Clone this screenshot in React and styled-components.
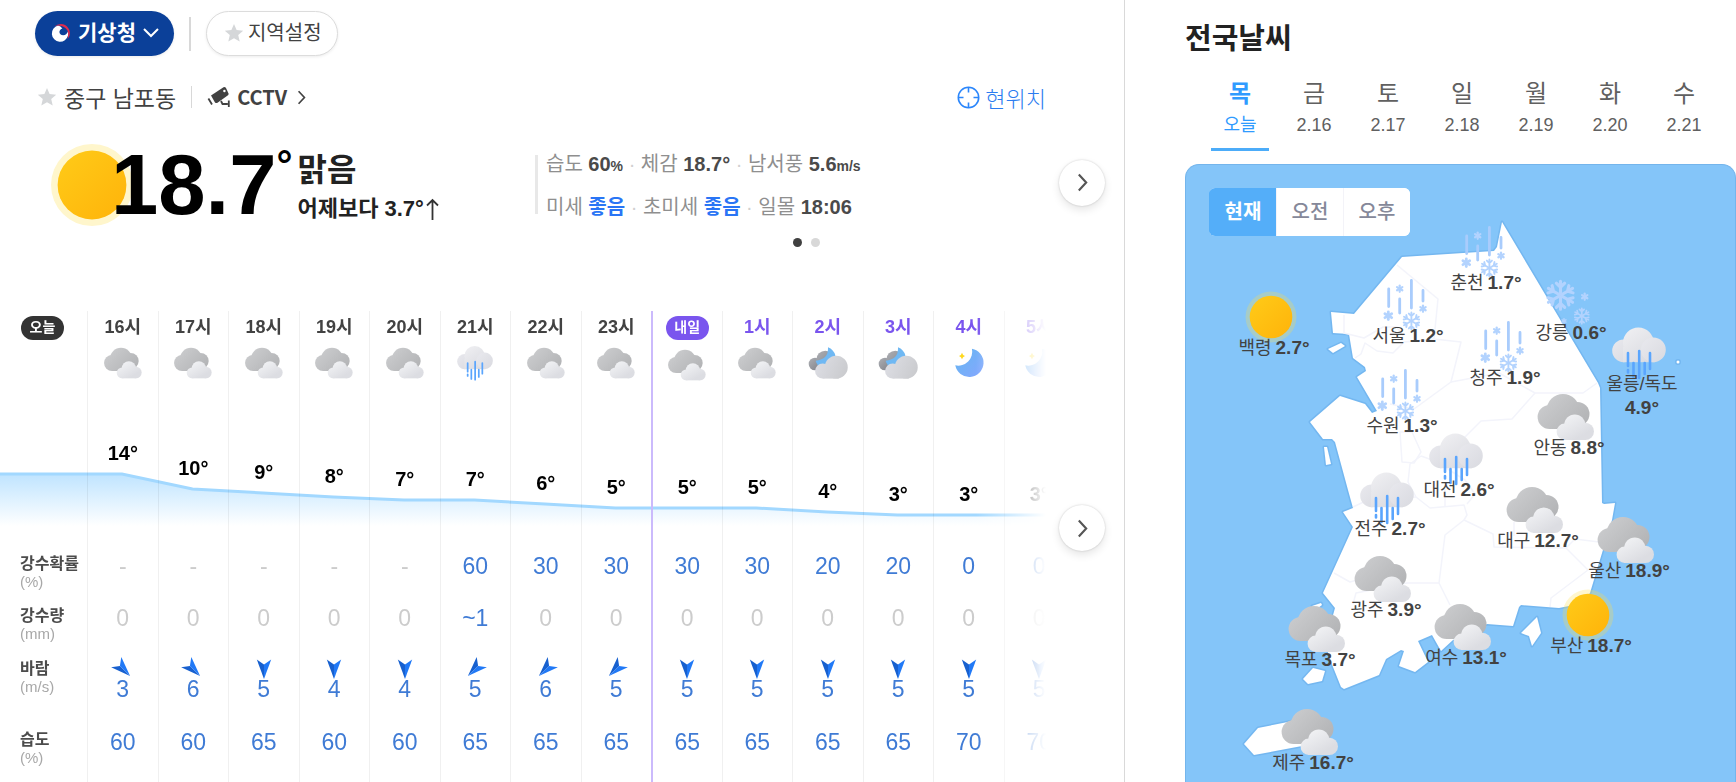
import React, { useState } from 'react'
import styled, { createGlobalStyle } from 'styled-components'

const GlobalStyle = createGlobalStyle`
  * {
    box-sizing: border-box;
  }

  body {
    margin: 0;
    background: #fff;
    color: #424242;
    font-family: 'Liberation Sans', 'Noto Sans CJK KR', sans-serif;
  }

  button {
    margin: 0;
    padding: 0;
    border: 0;
    background: none;
    color: inherit;
    font: inherit;
    cursor: pointer;
  }

  a {
    color: inherit;
    text-decoration: none;
  }

  svg {
    display: block;
    flex: none;
  }
`

const Page = styled.div`
  display: grid;
  grid-template-columns: minmax(0, 1fr) 611px;
  min-height: 100vh;
`

const Local = styled.main`
  min-width: 0;
  border-right: 1px solid #d9d9d9;
`

const Bar = styled.div`
  display: flex;
  align-items: center;
  padding: 11px 35px 0;
`

const Divider = styled.span`
  flex: none;
  width: ${p => (p.$thick ? 2 : 1)}px;
  height: ${p => (p.$thick ? 34 : 22)}px;
  margin: 0 15px;
  background: #d8d8d8;
`

const Pill = styled.button`
  display: flex;
  align-items: center;
  height: 45px;
  border-radius: 23px;
  line-height: 28px;
  white-space: nowrap;
  box-shadow: 0 1px 3px rgba(0, 0, 0, 0.08);
`

const ProviderPill = styled(Pill)`
  gap: 7px;
  padding: 0 15px 2px 16px;
  background: #0b4099;
  color: #fff;
  font-size: 21px;
  font-weight: bold;
`

const RegionPill = styled(Pill)`
  gap: 4px;
  padding: 0 15px 2px 17px;
  border: 1px solid #dcdcdc;
  background: #fff;
  font-size: 20px;
`

const Location = styled.div`
  display: flex;
  align-items: center;
  height: 40px;
  margin-top: 21px;
  padding: 0 78px 0 37px;
`

const Place = styled.button`
  display: flex;
  align-items: center;
  gap: 7px;
  font-size: 23px;
  white-space: nowrap;
`

const Cctv = styled.a`
  display: flex;
  align-items: center;
  gap: 6px;
  font-family: 'Noto Sans CJK KR', sans-serif;
  font-size: 20px;
  font-weight: bold;
  line-height: 30px;

  svg:last-child {
    margin-left: 4px;
  }
`

const Here = styled.button`
  display: flex;
  align-items: center;
  gap: 5px;
  margin-left: auto;
  color: #2b7cf0;
  font-size: 22px;
  font-weight: 300;
`

const Now = styled.section`
  display: grid;
  grid-template-columns: minmax(0, 1fr) 78px;
  margin-top: 1px;
`

const NowBody = styled.div`
  display: grid;
  grid-template-columns: 535px minmax(0, 1fr);
  padding-top: 26px;
`

const Reading = styled.div`
  display: flex;
  align-items: flex-start;
  padding-left: 51px;
`

const Temp = styled.strong`
  display: flex;
  margin-left: -22px;
  color: #000;
  font-size: 85px;
  line-height: 82px;
`

const Degree = styled.span`
  font-size: 40px;
  line-height: 42px;
`

const Status = styled.div`
  padding: 6px 0 0 5px;
  color: #222;
  font-weight: bold;
  white-space: nowrap;
`

const Sky = styled.div`
  font-size: 32px;
  line-height: 40px;
`

const Compare = styled.div`
  display: flex;
  align-items: center;
  gap: 2px;
  font-size: 22px;
  line-height: 38px;
`

const Detail = styled.div`
  display: grid;
  grid-template-columns: 3px minmax(0, 1fr);
  column-gap: 8px;
  align-items: start;
`

const DetailRule = styled.span`
  height: 59px;
  margin-top: 11px;
  background: #e8e8e8;
`

const DetailLine = styled.p`
  margin: 0;
  color: #8f8f8f;
  font-size: 20px;
  line-height: 41px;
  white-space: nowrap;

  b {
    color: ${p => (p.$dust ? '#2a75f5' : '#4a4a4a')};
  }

  b:last-child {
    color: #4a4a4a;
  }

  small {
    font-size: 14px;
  }

  i {
    color: #d0d0d0;
    font-style: normal;
  }
`

const Pager = styled.div`
  display: flex;
  justify-content: center;
  gap: 9px;
  padding: 10px 0 0 20px;
`

const PagerDot = styled.button`
  width: 9px;
  height: 9px;
  border-radius: 50%;
  background: ${p => (p.$on ? '#404040' : '#d8d8d8')};
`

const NextButton = styled.button`
  display: grid;
  place-items: center;
  justify-self: end;
  align-self: ${p => (p.$top ? 'start' : 'center')};
  width: 46px;
  height: 46px;
  margin: ${p => (p.$top ? 194 : 0)}px 19px 0 0;
  border-radius: 50%;
  background: #fff;
  box-shadow: 0 0 2px rgba(0, 0, 0, 0.2), 0 4px 9px rgba(0, 0, 0, 0.1);
`

const Hourly = styled.section`
  display: grid;
  grid-template-columns: minmax(0, 1fr) 78px;
  margin-top: 64px;
`

const Scroller = styled.div`
  overflow: hidden;
  mask-image: linear-gradient(to right, #000 calc(100% - 70px), transparent);
`

const Track = styled.div`
  position: relative;
  width: calc(100% + 28px);
`

// temperature curve runs behind the cells of the temperature row
const Curve = styled.svg`
  position: absolute;
  top: 75px;
  left: 0;
  width: 100%;
  height: 160px;
  pointer-events: none;
`

const Table = styled.table`
  position: relative;
  width: 100%;
  table-layout: fixed;
  border-collapse: separate;
  border-spacing: 0;

  tr > *:first-child {
    width: 87px;
  }
`

const Row = styled.tr`
  height: ${p => p.$h}px;
`

const Cell = styled.td`
  padding: ${p => p.$top || 0}px 0 0;
  border-left: ${p => (p.$tomorrow ? '2px solid #cbbafc' : '1px solid rgba(0, 0, 0, 0.06)')};
  color: ${p => (p.$muted ? '#ccc' : '#3f7bd5')};
  font-size: 23px;
  line-height: 20px;
  text-align: center;
  vertical-align: top;

  svg {
    margin: 0 auto;
  }
`

const HourCell = styled(Cell).attrs({ as: 'th' })`
  color: ${p => (p.$purple ? '#7a55ee' : '#424242')};
  font-size: 18px;
  line-height: 30px;
`

const TempCell = styled(Cell)`
  color: #000;
  font-size: 20px;
  font-weight: bold;
  line-height: 24px;
`

const RowHead = styled.th`
  padding: 8px 0 0 20px;
  color: #4c4c4c;
  font-size: 16px;
  font-weight: bold;
  line-height: 18px;
  text-align: left;
  vertical-align: top;
  white-space: nowrap;

  small {
    display: block;
    color: #a8a8a8;
    font-size: 15px;
    font-weight: normal;
  }
`

const DayHead = styled.th`
  padding: 0 0 0 21px;
  vertical-align: top;
`

const DayBadge = styled.span`
  display: block;
  width: 43px;
  height: 24px;
  margin: 5px ${p => (p.$purple ? 'auto' : 0)} 0;
  border-radius: 12px;
  background: ${p => (p.$purple ? '#7a55ee' : '#333')};
  color: #fff;
  font-size: 14px;
  line-height: 23px;
  text-align: center;
`

const WindArrow = styled.svg`
  && {
    margin-top: -2px;
  }
`

const Nation = styled.aside`
  display: flex;
  flex-direction: column;
  padding-left: 60px;
`

const Title = styled.h2`
  margin: 21px 0 0;
  color: #222;
  font-size: 29px;
  line-height: 36px;
`

const Days = styled.div`
  display: grid;
  grid-template-columns: repeat(7, 74px);
  margin-top: 20px;
  padding-left: 18px;
`

const Day = styled.button`
  display: flex;
  flex-direction: column;
  align-items: center;
  margin: 0 8px;
  border-bottom: 3px solid ${p => (p.$on ? '#4cacf9' : 'transparent')};
  color: ${p => (p.$on ? '#2f9bff' : '#606060')};
  font-size: 18px;
  line-height: 30px;
  padding-bottom: 8px;

  strong {
    font-size: 24px;
    font-weight: ${p => (p.$on ? 'bold' : 'normal')};
    line-height: 33px;
  }
`

const MapBox = styled.div`
  position: relative;
  flex: 1;
  min-height: 618px;
  margin-top: 13px;
  overflow: hidden;
  border: 1px solid #74b5ec;
  border-radius: 14px 14px 0 0;
  border-bottom: 0;
  background: #84c5f9;
`

const Land = styled.svg`
  position: absolute;
  top: -1px;
  left: -1px;
`

const Segments = styled.div`
  position: absolute;
  top: 23px;
  left: 23px;
  display: flex;
  overflow: hidden;
  border-radius: 6px;
  background: #fff;
`

const Segment = styled.button`
  width: 67px;
  height: 48px;
  padding-bottom: 4px;
  border-left: 1px solid ${p => (p.$on ? '#54aef9' : '#f3f3f8')};
  background: ${p => (p.$on ? '#54aef9' : '#fff')};
  color: ${p => (p.$on ? '#fff' : '#858899')};
  font-size: 20px;
  font-weight: ${p => (p.$on ? 'bold' : 500)};
`

const City = styled.a`
  position: absolute;
  display: flex;
  flex-direction: column;
  align-items: center;
  width: 120px;
  margin: -62px 0 0 -61px;
  color: #424242;
  font-size: 18px;
  line-height: 24px;

  svg {
    margin: 0 6px -11px 0;
  }
`

const CityLabel = styled.span`
  display: flex;
  flex-direction: ${p => (p.$stacked ? 'column' : 'row')};
  align-items: center;
  column-gap: 4px;
  position: relative;

  b {
    font-size: 19px;
  }
`

const hours = [
  { label: '16시', sky: 'cloud', t: 14, pop: '-', rain: '0', dir: -45, wind: 3, hum: 60 },
  { label: '17시', sky: 'cloud', t: 10, pop: '-', rain: '0', dir: -45, wind: 6, hum: 60 },
  { label: '18시', sky: 'cloud', t: 9, pop: '-', rain: '0', dir: 0, wind: 5, hum: 65 },
  { label: '19시', sky: 'cloud', t: 8, pop: '-', rain: '0', dir: 0, wind: 4, hum: 60 },
  { label: '20시', sky: 'cloud', t: 7, pop: '-', rain: '0', dir: 0, wind: 4, hum: 60 },
  { label: '21시', sky: 'rain', t: 7, pop: '60', rain: '~1', dir: 45, wind: 5, hum: 65 },
  { label: '22시', sky: 'cloud', t: 6, pop: '30', rain: '0', dir: 45, wind: 6, hum: 65 },
  { label: '23시', sky: 'cloud', t: 5, pop: '30', rain: '0', dir: 45, wind: 5, hum: 65 },
  { label: '내일', sky: 'cloud', t: 5, pop: '30', rain: '0', dir: 0, wind: 5, hum: 65, tomorrow: true },
  { label: '1시', sky: 'cloud', t: 5, pop: '30', rain: '0', dir: 0, wind: 5, hum: 65, next: true },
  { label: '2시', sky: 'cloudMoon', t: 4, pop: '20', rain: '0', dir: 0, wind: 5, hum: 65, next: true },
  { label: '3시', sky: 'cloudMoon', t: 3, pop: '20', rain: '0', dir: 0, wind: 5, hum: 65, next: true },
  { label: '4시', sky: 'moon', t: 3, pop: '0', rain: '0', dir: 0, wind: 5, hum: 70, next: true },
  { label: '5시', sky: 'moon', t: 3, pop: '0', rain: '0', dir: 0, wind: 5, hum: 70, next: true },
]

const days = [
  ['목', '오늘'],
  ['금', '2.16'],
  ['토', '2.17'],
  ['일', '2.18'],
  ['월', '2.19'],
  ['화', '2.20'],
  ['수', '2.21'],
]

// x, y: centre of the label on the map
const cities = [
  { name: '백령', t: '2.7', sky: 'sun', x: 89, y: 184 },
  { name: '춘천', t: '1.7', sky: 'sleet', x: 301, y: 119 },
  { name: '서울', t: '1.2', sky: 'sleet', x: 223, y: 172 },
  { name: '강릉', t: '0.6', sky: 'snow', x: 386, y: 169 },
  { name: '청주', t: '1.9', sky: 'sleet', x: 320, y: 214 },
  { name: '울릉/독도', t: '4.9', sky: 'rain', x: 457, y: 220, stacked: true },
  { name: '수원', t: '1.3', sky: 'sleet', x: 217, y: 262 },
  { name: '안동', t: '8.8', sky: 'cloud', x: 384, y: 284 },
  { name: '대전', t: '2.6', sky: 'rain', x: 274, y: 326 },
  { name: '전주', t: '2.7', sky: 'rain', x: 205, y: 365 },
  { name: '대구', t: '12.7', sky: 'cloud', x: 353, y: 377 },
  { name: '울산', t: '18.9', sky: 'cloud', x: 444, y: 407 },
  { name: '광주', t: '3.9', sky: 'cloud', x: 201, y: 446 },
  { name: '목포', t: '3.7', sky: 'cloud', x: 135, y: 496 },
  { name: '여수', t: '13.1', sky: 'cloud', x: 281, y: 494 },
  { name: '부산', t: '18.7', sky: 'sun', x: 406, y: 482 },
  { name: '제주', t: '16.7', sky: 'cloud', x: 128, y: 599 },
]

const lineY = t => Math.round(88 + (14 - t) * 3.77)

const Gradients = () => (
  <svg width='0' height='0' style={{ position: 'absolute' }} aria-hidden='true'>
    <defs>
      <linearGradient id='sunFill' x1='0' y1='0' x2='1' y2='1'>
        <stop offset='0' stopColor='#ffcb18' />
        <stop offset='1' stopColor='#ffb30a' />
      </linearGradient>
      <linearGradient id='darkFill' gradientUnits='userSpaceOnUse' x1='8' y1='8' x2='44' y2='44'>
        <stop offset='0' stopColor='#cccdcf' />
        <stop offset='1' stopColor='#b2b3b5' />
      </linearGradient>
      <linearGradient id='lightFill' gradientUnits='userSpaceOnUse' x1='26' y1='28' x2='40' y2='52'>
        <stop offset='0' stopColor='#f3f4f6' />
        <stop offset='1' stopColor='#dcdde2' />
      </linearGradient>
      <linearGradient id='rainFill' gradientUnits='userSpaceOnUse' x1='16' y1='6' x2='40' y2='40'>
        <stop offset='0' stopColor='#efeff2' />
        <stop offset='1' stopColor='#d9dae0' />
      </linearGradient>
      <linearGradient id='rainSide' x1='0' y1='0' x2='1' y2='1'>
        <stop offset='0' stopColor='#e9e9ee' />
        <stop offset='1' stopColor='#d9dae0' />
      </linearGradient>
      <linearGradient id='nightFill' x1='0' y1='0' x2='1' y2='1'>
        <stop offset='0' stopColor='#aeb0b5' />
        <stop offset='1' stopColor='#7d7f86' />
      </linearGradient>
      <linearGradient id='frontFill' gradientUnits='userSpaceOnUse' x1='14' y1='28' x2='58' y2='50'>
        <stop offset='0' stopColor='#dcdde3' />
        <stop offset='1' stopColor='#c9cacd' />
      </linearGradient>
      <linearGradient id='moonFill' x1='0' y1='0' x2='1' y2='1'>
        <stop offset='0' stopColor='#63b8f0' />
        <stop offset='1' stopColor='#86a6ff' />
      </linearGradient>
    </defs>
  </svg>
)

const Flake = ({ x, y, r }) => (
  <g transform={`translate(${x} ${y}) scale(${r / 10})`} stroke='#b3d3fe' strokeLinecap='round' fill='none'>
    {[0, 60, 120, 180, 240, 300].map(a => (
      <path
        key={a}
        transform={`rotate(${a})`}
        strokeWidth={r > 6 ? 2 : 5}
        d={r > 6 ? 'M0 -1V-9M-2.7 -7.8L0 -5.2L2.7 -7.8' : 'M0 0V-7'}
      />
    ))}
  </g>
)

const skies = {
  sun: (
    <>
      <circle cx='30' cy='30' r='25.5' fill='#ffe04a' opacity='.28' />
      <circle cx='30' cy='30' r='21.3' fill='url(#sunFill)' />
    </>
  ),
  cloud: (
    <>
      <g fill='url(#darkFill)'>
        <circle cx='13.6' cy='30' r='12' />
        <circle cx='41.5' cy='27' r='12' />
        <path d='M13.6 24H45V42H13.6Z' />
        <circle cx='27' cy='23.5' r='16.5' />
      </g>
      <g fill='url(#lightFill)'>
        <circle cx='28.8' cy='44.8' r='8.2' />
        <path d='M28 42H50V53H28Z' />
        <circle cx='38.8' cy='38' r='10.6' />
        <circle cx='49.4' cy='44.4' r='8.6' />
      </g>
    </>
  ),
  rain: (
    <>
      <circle cx='14.6' cy='27.8' r='11.4' fill='url(#rainSide)' />
      <path d='M14 24H46V39.2H14Z' fill='url(#rainFill)' />
      <circle cx='29.4' cy='20' r='15.4' fill='url(#rainFill)' />
      <circle cx='44.4' cy='26.8' r='12.4' fill='url(#rainSide)' />
      <path
        d='M19 30V43M19 47V49.5M24.5 40V54M30.2 28V55M35.7 40V51M41 30V46'
        stroke='#5aa5fd'
        strokeWidth='2.6'
        strokeLinecap='round'
      />
    </>
  ),
  sleet: (
    <>
      <path
        d='M13.7 14V31.5M24.7 24V38M36.4 5.5V33M48 15.5V26'
        stroke='#a9ccfc'
        strokeWidth='2.8'
        strokeLinecap='round'
      />
      <Flake x={24.7} y={13.7} r={4.4} />
      <Flake x={48} y={33.7} r={4.4} />
      <Flake x={13.3} y={40.7} r={5.6} />
      <Flake x={36.4} y={46} r={9.5} />
    </>
  ),
  snow: (
    <>
      <Flake x={22.5} y={23.3} r={15.5} />
      <Flake x={43.8} y={44} r={8.6} />
      <Flake x={46.7} y={24.7} r={4.4} />
      <Flake x={26} y={49} r={3.2} />
    </>
  ),
  moon: (
    <>
      <path d='M34.4 8.5A21.4 21.4 0 1 1 9.4 33.5A21 21 0 0 0 34.4 8.5Z' fill='url(#moonFill)' />
      <path d='M19.5 14.5Q20.5 18.5 24 19.5Q20.5 20.5 19.5 24.5Q18.5 20.5 15 19.5Q18.5 18.5 19.5 14.5Z' fill='#ffd91f' />
    </>
  ),
  cloudMoon: (
    <>
      <circle cx='10.5' cy='31.5' r='9.5' fill='url(#nightFill)' />
      <circle cx='26' cy='25' r='13.5' fill='url(#nightFill)' />
      <path d='M30 6.5Q38.5 10 41 18.5L38 38H20Q13 33 11.5 26.5Q31 25 30 6.5Z' fill='#6fb8f3' />
      <circle cx='22' cy='42' r='11.4' fill='url(#frontFill)' />
      <path d='M22 35H46V53.4H22Z' fill='url(#frontFill)' />
      <circle cx='42.4' cy='36.2' r='17.2' fill='url(#frontFill)' />
    </>
  ),
}

const SkyIcon = ({ name, size = 60 }) => (
  <svg width={size} height={size} viewBox='0 0 60 60' aria-hidden='true'>
    {skies[name]}
  </svg>
)

const Star = () => (
  <svg width='20' height='20' viewBox='0 0 20 20' fill='#d5d7d9' aria-hidden='true'>
    <path d='M10 1L12.6 7.1L19.2 7.7L14.2 12.1L15.7 18.6L10 15.2L4.3 18.6L5.8 12.1L0.8 7.7L7.4 7.1Z' />
  </svg>
)

const Chevron = ({ w, h, width = 2, color = '#555' }) => (
  <svg width={w} height={h} viewBox='0 0 10 18' fill='none' stroke={color} strokeWidth={width} aria-hidden='true'>
    <path d='M1.5 1.5L8.5 9L1.5 16.5' />
  </svg>
)

const Header = () => (
  <Bar>
    <ProviderPill>
      <svg width='20' height='20' viewBox='0 0 20 20' aria-hidden='true'>
        <path
          d='M7 2.6A8.2 8.2 0 1 0 17 12.5Q17.6 10.4 17 8.6Q15.6 12.2 12.2 12.2Q8.6 12 8.4 9Q8.4 6.4 11.4 5.4Q9.6 3.2 7 2.6Z'
          fill='#fff'
        />
        <path d='M3.4 3.6Q6 1 10 1A9.2 9.2 0 0 1 18.4 13Q17.8 14.6 16.4 16Q18 11 16.4 7.6Q14.6 4 10.4 3Q6.6 2 3.4 3.6Z' fill='#e02b4d' />
      </svg>
      기상청
      <svg width='16' height='10' viewBox='0 0 16 10' fill='none' stroke='#fff' strokeWidth='2' aria-hidden='true'>
        <path d='M1 1L8 8L15 1' />
      </svg>
    </ProviderPill>
    <Divider $thick />
    <RegionPill>
      <Star />
      지역설정
    </RegionPill>
  </Bar>
)

const LocationRow = () => (
  <Location>
    <Place>
      <Star />
      중구 남포동
    </Place>
    <Divider />
    <Cctv href='#cctv'>
      <svg width='24' height='22' viewBox='0 0 24 22' fill='#424242' aria-hidden='true'>
        <path d='M4 9.5L16.5 1.2Q18 .6 19 2L21.5 7.5Q21.8 8.6 21 9.2L10.5 16.8Q9 17.5 8 16.4Z' />
        <circle cx='17.4' cy='5' r='1.2' fill='#fff' />
        <path d='M1.4 12.5L5 18.5M14 15L15.5 18H20.8M21.8 14.6V21' fill='none' stroke='#424242' strokeWidth='1.8' />
      </svg>
      CCTV
      <Chevron w={9} h={15} color='#424242' />
    </Cctv>
    <Here>
      <svg width='23' height='23' viewBox='0 0 23 23' fill='none' stroke='#2b86fb' strokeWidth='1.6' aria-hidden='true'>
        <circle cx='11.5' cy='11.5' r='10.2' />
        <path d='M11.5 1V6.5M11.5 16.5V22M1 11.5H6.5M16.5 11.5H22' />
      </svg>
      현위치
    </Here>
  </Location>
)

const CurrentWeather = () => (
  <Now>
    <NowBody>
      <Reading>
        <svg width='82' height='82' viewBox='0 0 82 82' aria-hidden='true'>
          <circle cx='41' cy='41' r='41' fill='#fff6cc' />
          <circle cx='41' cy='41' r='34.4' fill='url(#sunFill)' />
        </svg>
        <Temp>
          18.7<Degree>°</Degree>
        </Temp>
        <Status>
          <Sky>맑음</Sky>
          <Compare>
            어제보다 3.7°
            <svg width='13' height='22' viewBox='0 0 13 22' fill='none' stroke='#333' strokeWidth='1.8' aria-hidden='true'>
              <path d='M6.5 22V2M1 7.5L6.5 2L12 7.5' />
            </svg>
          </Compare>
        </Status>
      </Reading>
      <Detail>
        <DetailRule />
        <div>
          <DetailLine>
            습도 <b>60<small>%</small></b> <i>·</i> 체감 <b>18.7°</b> <i>·</i> 남서풍 <b>5.6<small>m/s</small></b>
          </DetailLine>
          <DetailLine $dust>
            미세 <b>좋음</b> <i>·</i> 초미세 <b>좋음</b> <i>·</i> 일몰 <b>18:06</b>
          </DetailLine>
          <Pager>
            <PagerDot $on aria-label='1' />
            <PagerDot aria-label='2' />
          </Pager>
        </div>
      </Detail>
    </NowBody>
    <NextButton aria-label='다음'>
      <Chevron w={11} h={19} />
    </NextButton>
  </Now>
)

const TempCurve = () => {
  const points = hours.map((h, i) => `${122 + i * 70.5},${lineY(h.t)}`)
  const line = `0,${lineY(hours[0].t)} ${points.join(' ')} 1074,${lineY(3)}`

  return (
    <Curve viewBox='0 0 1074 160' preserveAspectRatio='none' aria-hidden='true'>
      <defs>
        <linearGradient id='curveFill' gradientUnits='userSpaceOnUse' x1='0' y1='88' x2='0' y2='140'>
          <stop offset='0' stopColor='#bfe4ff' />
          <stop offset='1' stopColor='#fff' />
        </linearGradient>
      </defs>
      <polygon points={`${line} 1074,140 0,140`} fill='url(#curveFill)' />
      <polyline points={line} fill='none' stroke='#a2d8ff' strokeWidth='3' />
    </Curve>
  )
}

const HourlyForecast = () => (
  <Hourly>
    <Scroller>
      <Track>
        <TempCurve />
        <Table>
          <thead>
            <Row $h={31}>
              <DayHead scope='col'>
                <DayBadge>오늘</DayBadge>
              </DayHead>
              {hours.map(h => (
                <HourCell key={h.label} scope='col' $tomorrow={h.tomorrow} $purple={h.next} $top={h.tomorrow ? 0 : 1}>
                  {h.tomorrow ? <DayBadge $purple>{h.label}</DayBadge> : h.label}
                </HourCell>
              ))}
            </Row>
          </thead>
          <tbody>
            <Row $h={44}>
              <td />
              {hours.map(h => (
                <Cell key={h.label} $tomorrow={h.tomorrow} $top={h.tomorrow ? 3 : 1}>
                  <SkyIcon name={h.sky} size={40} />
                </Cell>
              ))}
            </Row>
            <Row $h={161}>
              <td />
              {hours.map(h => (
                <TempCell key={h.label} $tomorrow={h.tomorrow} $top={lineY(h.t) - 33}>
                  {h.t}°
                </TempCell>
              ))}
            </Row>
            <Row $h={52}>
              <RowHead scope='row'>
                강수확률<small>(%)</small>
              </RowHead>
              {hours.map(h => (
                <Cell key={h.label} $tomorrow={h.tomorrow} $top={9} $muted={h.pop === '-'}>
                  {h.pop}
                </Cell>
              ))}
            </Row>
            <Row $h={53}>
              <RowHead scope='row'>
                강수량<small>(mm)</small>
              </RowHead>
              {hours.map(h => (
                <Cell key={h.label} $tomorrow={h.tomorrow} $top={9} $muted={h.rain === '0'}>
                  {h.rain}
                </Cell>
              ))}
            </Row>
            <Row $h={71}>
              <RowHead scope='row'>
                바람<small>(m/s)</small>
              </RowHead>
              {hours.map(h => (
                <Cell key={h.label} $tomorrow={h.tomorrow} $top={9}>
                  <WindArrow width='20' height='20' viewBox='0 0 20 20' overflow='visible' aria-hidden='true'>
                    <g transform={`rotate(${h.dir} 10 10)`}>
                      <path d='M2.8 .4L10 5.6V20Z' fill='#1760cf' />
                      <path d='M17.2 .4L10 5.6V20Z' fill='#2179f6' />
                    </g>
                  </WindArrow>
                  {h.wind}
                </Cell>
              ))}
            </Row>
            <Row $h={59}>
              <RowHead scope='row'>
                습도<small>(%)</small>
              </RowHead>
              {hours.map(h => (
                <Cell key={h.label} $tomorrow={h.tomorrow} $top={9}>
                  {h.hum}
                </Cell>
              ))}
            </Row>
          </tbody>
        </Table>
      </Track>
    </Scroller>
    <NextButton $top aria-label='다음 시간'>
      <Chevron w={11} h={19} />
    </NextButton>
  </Hourly>
)

const KoreaMap = () => (
  <Land width='552' height='618' viewBox='0 0 552 618' aria-hidden='true'>
    <g fill='#fff' stroke='#74b7f0' strokeWidth='3' strokeLinejoin='round' paintOrder='stroke'>
      <path d='M317 58L413 219L415 224L417 339L419 340L430 339L427 356L414 399L405 429L394 440L374 444L336 441L334 443L328 462L302 460L268 476L256 487L247 471L233 477L243 498L230 508L214 502L219 487L216 486L201 495L194 511L159 525L156 523L148 503L140 480L150 444L138 429L168 363L158 348L168 344L163 326L150 278L147 275L138 275L125 258L155 232L180 240L187 249L192 247L172 213L181 207L180 203L168 194L164 170L148 169L146 148L169 150L217 93L309 87L312 83Z' />
      <path d='M143 185L156 179L160 182L148 189Z' />
      <path d='M139 283L142 283L146 300L141 301Z' />
      <path d='M352 453L356 469L347 482L344 472L336 469Z' />
      <path d='M128 504L140 507L137 517L123 520L118 515Z' />
      <path d='M127 442L136 439L137 441L130 446Z' />
      <path d='M59 580L73 564L108 557L140 556L146 566L138 577L117 582L69 591Z' />
      <circle cx='493' cy='198' r='1.5' />
    </g>
    <g fill='none' stroke='#f3f4fb' strokeWidth='1.5' strokeLinejoin='round'>
      <path d='M212 101L253 135L249 175L276 178L266 218L229 245L205 240' />
      <path d='M266 218L314 209L350 229L398 229L412 219' />
      <path d='M350 229L327 255L296 257L280 273L262 290' />
      <path d='M159 151V169L179 174L198 163H212L218 172' />
      <path d='M170 194L176 190L180 179L192 187L208 189L219 178L249 175' />
      <path d='M215 268L217 298L229 299L236 288L227 268Z' />
      <path d='M236 292L225 300L223 318L231 333L245 344L279 341L282 351L279 356L308 370L309 383L381 384L403 406L366 434L365 443' />
      <path d='M279 356L260 371L254 419L265 441M254 419H222L171 429L168 440' />
      <path d='M149 409L165 418L172 416M381 384L390 375L414 378M329 358V372' />
      <path d='M168 343L185 335L231 333M236 292L250 297L280 316L290 330L282 340M260 325V343' />
    </g>
  </Land>
)

const NationWeather = () => {
  const [day, setDay] = useState(0)
  const [part, setPart] = useState(0)

  return (
    <Nation>
      <Title>전국날씨</Title>
      <Days>
        {days.map(([name, date], i) => (
          <Day key={name} $on={i === day} onClick={() => setDay(i)}>
            <strong>{name}</strong>
            {date}
          </Day>
        ))}
      </Days>
      <MapBox>
        <KoreaMap />
        {cities.map(c => (
          <City key={c.name} href={`#${c.name}`} style={{ left: c.x, top: c.y }}>
            <SkyIcon name={c.sky} />
            <CityLabel $stacked={c.stacked}>
              {c.name} <b>{c.t}°</b>
            </CityLabel>
          </City>
        ))}
        <Segments>
          {['현재', '오전', '오후'].map((name, i) => (
            <Segment key={name} $on={i === part} onClick={() => setPart(i)}>
              {name}
            </Segment>
          ))}
        </Segments>
      </MapBox>
    </Nation>
  )
}

export default () => (
  <>
    <GlobalStyle />
    <Gradients />
    <Page>
      <Local>
        <Header />
        <LocationRow />
        <CurrentWeather />
        <HourlyForecast />
      </Local>
      <NationWeather />
    </Page>
  </>
)
